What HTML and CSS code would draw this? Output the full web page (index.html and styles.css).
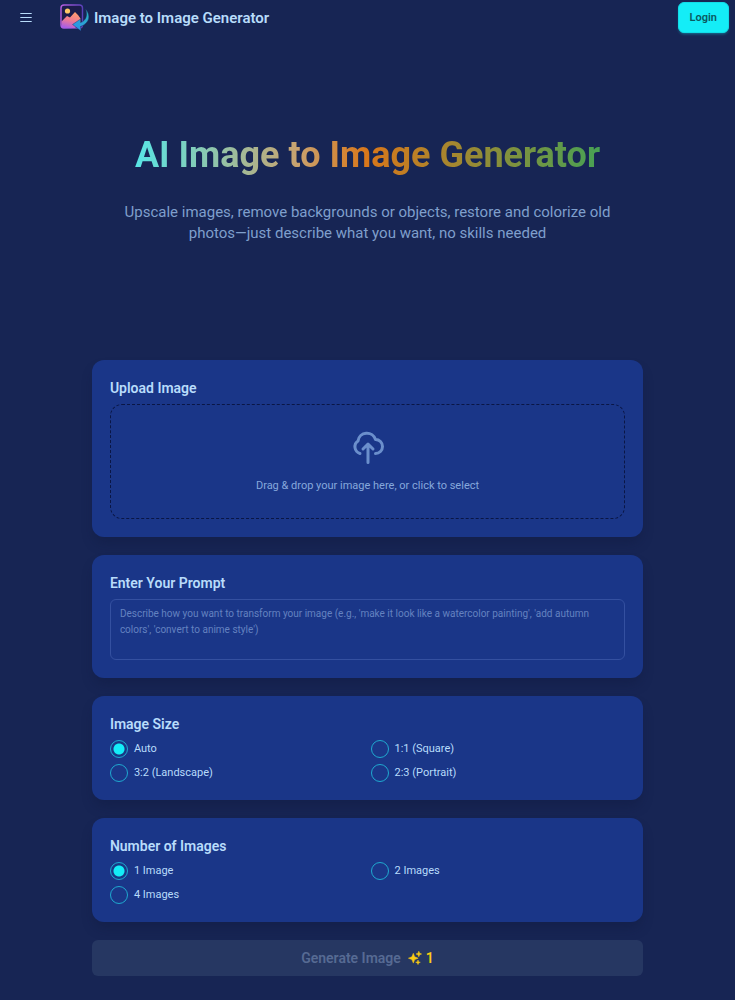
FILE: index.html
```html
<!DOCTYPE html>
<html lang="en">
<head>
<meta charset="utf-8">
<meta name="viewport" content="width=device-width, initial-scale=1">
<title>Image to Image Generator</title>
<link rel="stylesheet" href="styles.css">
</head>
<body>
<header class="navbar">
  <button class="menu-button" type="button" aria-label="Open menu">
    <svg viewBox="0 0 12 12" width="12" height="12" fill="none" stroke="currentColor" stroke-width="1.1" stroke-linecap="round"><path d="M.7 1.500h10.600M.7 5.500h10.600M.7 9.500h10.600"/></svg>
  </button>
  <a class="brand" href="#">
    <svg class="logo" viewBox="0 0 30 28" width="30" height="28" aria-hidden="true">
      <defs>
        <linearGradient id="frame" x1="0" y1="0" x2="1" y2="0"><stop offset="0" stop-color="#b65ee0"/><stop offset="1" stop-color="#5940b8"/></linearGradient>
        <linearGradient id="hill" x1="0.6" y1="0" x2="0.3" y2="1"><stop offset="0" stop-color="#ff9d6c"/><stop offset=".5" stop-color="#f17b91"/><stop offset="1" stop-color="#a75de8"/></linearGradient>
        <linearGradient id="arrow" x1="1" y1="0" x2="0" y2="1"><stop offset="0" stop-color="#28b5bd"/><stop offset="1" stop-color="#2d8ff0"/></linearGradient>
      </defs>
      <rect x="1" y="1" width="21.500" height="23" rx="3" fill="#1b1c4b" stroke="url(#frame)" stroke-width="1.400"/>
      <circle cx="7.500" cy="7" r="2.600" fill="#ffc766"/>
      <path d="M1.500 17.500 7 12l3 1.500L15 8l3 3 2.500 3.500v4L15 24H4q-2.500 0-2.500-3z" fill="url(#hill)"/>
      <path d="M25.500 5C31 11 30 19 20.500 22.500l.5 4.500-8.500-6.500L20.500 15v3.500C26 17 28 11 25.500 5z" fill="url(#arrow)" stroke="#1b2258" stroke-width=".4"/>
    </svg>
    <span>Image to Image Generator</span>
  </a>
  <button class="login" type="button">Login</button>
</header>
<main>
  <section class="hero">
    <h1>AI Image to Image Generator</h1>
    <p>Upscale images, remove backgrounds or objects, restore and colorize old photos—just describe what you want, no skills needed</p>
  </section>
  <form class="generator">
    <section class="card">
      <h2>Upload Image</h2>
      <button class="dropzone" type="button">
        <svg viewBox="0 0 36 36" width="36" height="36" fill="none" stroke="currentColor" stroke-width="3" stroke-linecap="round" stroke-linejoin="round" aria-hidden="true"><path d="M10 24.500A7 7 0 0 1 8 12a9 9 0 0 1 17.500-1.500A7 7 0 0 1 25.500 24.500M18 33.500V15.500M13 20l5-5 5 5"/></svg>
        <span>Drag &amp; drop your image here, or click to select</span>
      </button>
    </section>
    <section class="card">
      <h2><label for="prompt">Enter Your Prompt</label></h2>
      <textarea id="prompt" placeholder="Describe how you want to transform your image (e.g., 'make it look like a watercolor painting', 'add autumn colors', 'convert to anime style')"></textarea>
    </section>
    <section class="card">
      <h2 id="size-title">Image Size</h2>
      <div class="options" role="radiogroup" aria-labelledby="size-title">
        <label><input type="radio" name="size" checked>Auto</label>
        <label><input type="radio" name="size">1:1 (Square)</label>
        <label><input type="radio" name="size">3:2 (Landscape)</label>
        <label><input type="radio" name="size">2:3 (Portrait)</label>
      </div>
    </section>
    <section class="card">
      <h2 id="count-title">Number of Images</h2>
      <div class="options" role="radiogroup" aria-labelledby="count-title">
        <label><input type="radio" name="count" checked>1 Image</label>
        <label><input type="radio" name="count">2 Images</label>
        <label><input type="radio" name="count">4 Images</label>
      </div>
    </section>
    <button class="generate" type="submit" disabled>
      <span>Generate Image</span>
      <span class="cost">
        <svg viewBox="0 0 14 14" width="14" height="14" fill="currentColor" aria-hidden="true"><path d="M5.300 2.300 6.700 5.800 10.200 7.200 6.700 8.600 5.300 12.100 3.900 8.600.4 7.200 3.900 5.800zM10.800.2l.8 2 2 .8-2 .8-.8 2-.8-2-2-.8 2-.8zM10 9l.6 1.700 1.700.6-1.700.6L10 13.600l-.6-1.700-1.700-.6 1.700-.6z" stroke="currentColor" stroke-width=".5" stroke-linejoin="round"/></svg>
        1
      </span>
    </button>
  </form>
</main>
</body>
</html>
```
FILE: styles.css
```css
* {
  box-sizing: border-box;
}

body {
  margin: 0;
  background: #172554;
  color: #b8dcfb;
  font-family: Roboto, "Liberation Sans", sans-serif;
  font-size: 11px;
  line-height: 16px;
}

button,
textarea {
  font: inherit;
}

h1,
h2,
p {
  margin: 0;
}

.navbar {
  display: flex;
  align-items: center;
  padding: 2px 6px 0 20px;
}

.menu-button {
  display: flex;
  padding: 0;
  border: 0;
  background: none;
  color: inherit;
}

.brand {
  display: flex;
  align-items: center;
  gap: 4px;
  margin-left: 28px;
  color: inherit;
  font-size: 15px;
  font-weight: 600;
  text-decoration: none;
}

.login {
  height: 31px;
  margin-left: auto;
  padding: 0 11px;
  border: 1px solid #12dce8;
  border-radius: 6px;
  background: #14edf7;
  box-shadow: 0 2px 3px -1px #14edf766;
  color: #0b5960;
  font-weight: 600;
}

.hero {
  display: flex;
  flex-direction: column;
  align-items: center;
  gap: 24px;
  padding: 100px 24px 116px;
  text-align: center;
}

.hero h1 {
  background: linear-gradient(90deg, #58e6e6, #c9a26e 35%, #d9771a 50%, #48a154);
  background-clip: text;
  -webkit-background-clip: text;
  color: transparent;
  font-size: 36px;
  font-weight: 700;
  line-height: 45px;
}

.hero p {
  max-width: 504px;
  color: #7f9fcc;
  font-size: 15px;
  line-height: 21px;
}

.generator {
  display: flex;
  flex-direction: column;
  gap: 18px;
  width: 75%;
  margin: 0 auto;
  padding-bottom: 24px;
}

.card {
  padding: 18px;
  border-radius: 12px;
  background: #1a3688;
  box-shadow: 0 8px 12px -2px #0f173c59;
}

.card h2 {
  margin-bottom: 6px;
  font-size: 14px;
  font-weight: 600;
  line-height: 20px;
}

.dropzone {
  display: flex;
  flex-direction: column;
  align-items: center;
  gap: 13px;
  width: 100%;
  padding: 24px;
  border: 1px dashed #0a1645;
  border-radius: 12px;
  background: none;
  color: #6b8fcc;
}

.dropzone span {
  color: #86a8dc;
}

textarea {
  display: block;
  width: 100%;
  height: 61px;
  padding: 6px 9px;
  border: 1px solid #3450a0;
  border-radius: 6px;
  background: transparent;
  color: inherit;
  font-size: 10px;
  resize: none;
}

textarea::placeholder {
  color: #6482c0;
}

.options {
  display: grid;
  grid-template-columns: 1fr 1fr;
  gap: 6px;
}

.options label {
  display: flex;
  align-items: center;
  gap: 6px;
  line-height: 18px;
}

.options input {
  appearance: none;
  width: 18px;
  height: 18px;
  margin: 0;
  border: 1px solid #1fa9d0;
  border-radius: 50%;
}

.options input:checked {
  background: radial-gradient(circle, #14edf7 5px, #173985 6px);
}

.generate {
  display: flex;
  align-items: center;
  justify-content: center;
  gap: 7px;
  height: 36px;
  border: 0;
  border-radius: 6px;
  background: #263762;
  color: #566a93;
  font-size: 14px;
  font-weight: 600;
}

.cost {
  display: flex;
  align-items: center;
  gap: 4px;
  color: #facc15;
}
```
